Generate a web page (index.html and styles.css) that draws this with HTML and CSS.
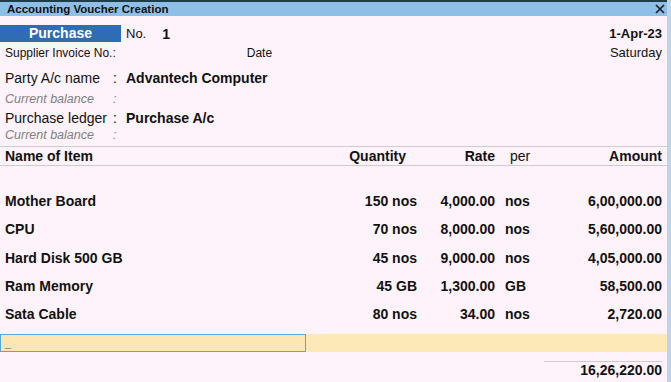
FILE: index.html
```html
<!DOCTYPE html>
<html lang="en">

<head>
    <meta charset="UTF-8">
    <meta name="viewport" content="width=device-width, initial-scale=1.0">
    <title>Accounting Voucher Creation</title>
    <link rel="stylesheet" href="styles.css">
</head>

<body>
    <div class="window">
        <div class="top-strip"></div>
        <div class="title-bar">
            <span>Accounting Voucher Creation</span>
            <svg class="close-icon" width="10" height="10" viewBox="0 0 10 10">
                <path d="M1 1 L9 9 M9 1 L1 9" stroke="#1a1a1a" stroke-width="1.6" fill="none" />
            </svg>
        </div>

        <div class="voucher-head">
            <div class="voucher-type">Purchase</div>
            <span class="voucher-no-label">No.</span>
            <span class="voucher-no">1</span>
            <span class="voucher-date">1-Apr-23</span>
        </div>

        <div class="invoice-row">
            <span class="invoice-label">Supplier Invoice No.:</span>
            <span class="date-label">Date</span>
            <span class="weekday">Saturday</span>
        </div>

        <div class="ledger-row party-row">
            <span class="ledger-label">Party A/c name</span>
            <span class="colon">:</span>
            <span class="ledger-value">Advantech Computer</span>
        </div>
        <div class="balance-row party-balance">
            <span class="ledger-label">Current balance</span>
            <span class="colon">:</span>
        </div>
        <div class="ledger-row purchase-row">
            <span class="ledger-label">Purchase ledger</span>
            <span class="colon">:</span>
            <span class="ledger-value">Purchase A/c</span>
        </div>
        <div class="balance-row">
            <span class="ledger-label">Current balance</span>
            <span class="colon">:</span>
        </div>

        <div class="item-grid item-header">
            <span>Name of Item</span>
            <span class="num qty-head">Quantity</span>
            <span class="num">Rate</span>
            <span class="per per-head">per</span>
            <span class="num">Amount</span>
        </div>

        <div class="items">
            <div class="item-grid item-row">
                <span>Mother Board</span>
                <span class="num">150 nos</span>
                <span class="num">4,000.00</span>
                <span class="per">nos</span>
                <span class="num">6,00,000.00</span>
            </div>
            <div class="item-grid item-row">
                <span>CPU</span>
                <span class="num">70 nos</span>
                <span class="num">8,000.00</span>
                <span class="per">nos</span>
                <span class="num">5,60,000.00</span>
            </div>
            <div class="item-grid item-row">
                <span>Hard Disk 500 GB</span>
                <span class="num">45 nos</span>
                <span class="num">9,000.00</span>
                <span class="per">nos</span>
                <span class="num">4,05,000.00</span>
            </div>
            <div class="item-grid item-row">
                <span>Ram Memory</span>
                <span class="num">45 GB</span>
                <span class="num">1,300.00</span>
                <span class="per">GB</span>
                <span class="num">58,500.00</span>
            </div>
            <div class="item-grid item-row">
                <span>Sata Cable</span>
                <span class="num">80 nos</span>
                <span class="num">34.00</span>
                <span class="per">nos</span>
                <span class="num">2,720.00</span>
            </div>
        </div>

        <div class="entry-row">
            <div class="entry-field"><span class="cursor">_</span></div>
        </div>

        <div class="total-row">
            <span class="total">16,26,220.00</span>
        </div>
    </div>
</body>

</html>
```

FILE: styles.css
```css
:root {
    --bg-color: #fef3fa;
    --title-bg: #8ec0e7;
    --type-bg: #2e6cb5;
    --text-primary: #111111;
    --text-muted: #808080;
    --line-color: #cfcccf;
    --entry-bg: #fde9b8;
    --entry-focus: #fde6b2;
    --focus-border: #5aa7d6;
}

html,
body {
    margin: 0;
    padding: 0;
    height: 100%;
}

body {
    font-family: 'Liberation Sans', Arial, sans-serif;
    background-color: var(--bg-color);
    color: var(--text-primary);
}

.window {
    width: 667px;
    height: 382px;
    border-right: 4px solid #bcd5ea;
    background-color: var(--bg-color);
    overflow: hidden;
}

.top-strip {
    height: 2px;
    background-color: #1e3c4a;
}

.title-bar {
    height: 14px;
    background-color: var(--title-bg);
    display: flex;
    align-items: center;
    justify-content: space-between;
    padding: 0 2px 0 7px;
    font-size: 11.5px;
    font-weight: bold;
}

.close-icon {
    display: block;
}

/* voucher header */

.voucher-head {
    display: flex;
    align-items: center;
    margin-top: 9px;
    height: 17px;
    font-size: 13px;
}

.voucher-type {
    width: 121px;
    height: 17px;
    line-height: 17px;
    background-color: var(--type-bg);
    color: white;
    font-weight: bold;
    font-size: 14px;
    text-align: center;
}

.voucher-no-label {
    margin-left: 5px;
}

.voucher-no {
    margin-left: 16px;
    font-weight: bold;
    font-size: 14px;
}

.voucher-date {
    margin-left: auto;
    margin-right: 5px;
    font-weight: bold;
}

.invoice-row {
    display: flex;
    height: 21px;
    line-height: 22px;
    padding: 0 5px;
    font-size: 12px;
}

.date-label {
    margin-left: 131px;
}

.weekday {
    margin-left: auto;
    font-size: 13px;
}

/* ledgers */

.ledger-row,
.balance-row {
    display: flex;
    padding-left: 5px;
}

.ledger-row {
    height: 18px;
    line-height: 18px;
    font-size: 14px;
}

.party-row {
    margin-top: 6px;
}

.purchase-row {
    margin-top: 2px;
}

.balance-row {
    height: 16px;
    line-height: 16px;
    font-size: 12.5px;
    font-style: italic;
    color: var(--text-muted);
}

.party-balance {
    margin-top: 4px;
}

.ledger-label {
    width: 108px;
}

.colon {
    width: 13px;
}

.ledger-value {
    font-weight: bold;
}

/* items table */

.item-grid {
    display: grid;
    grid-template-columns: 1fr 80px 78px 50px 117px;
    padding: 0 5px;
    font-weight: bold;
    font-size: 14px;
}

.item-header {
    margin-top: 3px;
    height: 18px;
    line-height: 18px;
    border-top: 1px solid var(--line-color);
    border-bottom: 1px solid var(--line-color);
}

.qty-head {
    padding-right: 11px;
}

.per {
    padding-left: 10px;
}

.per-head {
    padding-left: 15px;
    font-weight: normal;
}

.num {
    text-align: right;
}

.items {
    padding-top: 21px;
}

.item-row {
    height: 28.3px;
    line-height: 28.3px;
}

.entry-row {
    margin-top: 6px;
    height: 18px;
    background-color: var(--entry-bg);
}

.entry-field {
    box-sizing: border-box;
    width: 306px;
    height: 18px;
    border: 1px solid var(--focus-border);
    background-color: var(--entry-focus);
    padding-left: 4px;
    line-height: 14px;
}

.cursor {
    font-size: 11px;
    font-weight: bold;
    color: #1a2a5a;
}

.total-row {
    display: flex;
    justify-content: flex-end;
    margin-top: 9px;
    padding-right: 5px;
}

.total {
    width: 118px;
    text-align: right;
    border-top: 1px solid var(--line-color);
    line-height: 17px;
    font-weight: bold;
    font-size: 14px;
}
```
